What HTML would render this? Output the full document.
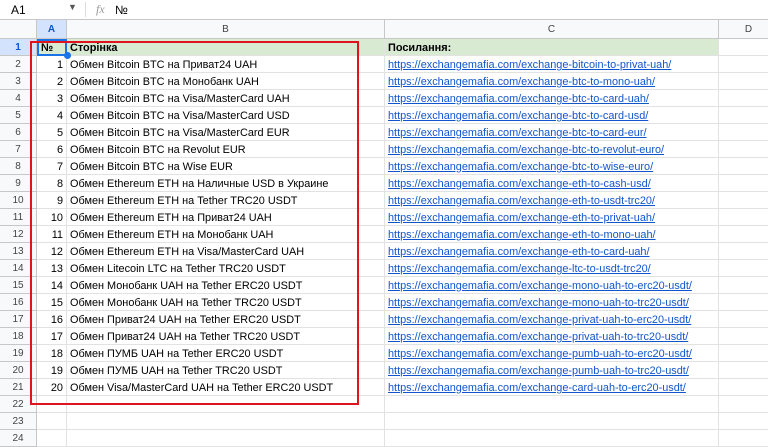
<!DOCTYPE html>
<html><head><meta charset="utf-8"><style>
*{margin:0;padding:0;box-sizing:border-box}
body{width:768px;height:441px;overflow:hidden;background:#fff;font-family:"Liberation Sans",Arial,sans-serif;font-size:10.9px;color:#000;position:relative}
.fb{position:absolute;left:0;top:0;width:768px;height:20px;border-bottom:1px solid #c7c7c7;background:#fff}
.hdr{position:absolute;top:20px;height:19px;background:#f8f9fa;border-right:1px solid #c7c7c7;border-bottom:1px solid #c7c7c7;text-align:center;font-size:10px;color:#444;line-height:19px}
.r{position:absolute;left:0;width:768px;height:17px}
.rh{position:absolute;left:0;top:0;width:37px;height:17px;background:#f8f9fa;border-right:1px solid #c7c7c7;border-bottom:1px solid #c7c7c7;text-align:center;font-size:10px;color:#444;line-height:17px}
.c{position:absolute;top:0;height:17px;border-right:1px solid #e2e2e2;border-bottom:1px solid #e2e2e2;line-height:18px;padding:0 3px;white-space:nowrap;overflow:hidden}
.a{left:37px;width:30px;text-align:right}
.b{left:67px;width:318px}
.cc{left:385px;width:334px;color:#1155cc;text-decoration:underline}
.d{left:719px;width:60px}
.g .a,.g .b,.g .cc{background:#d9ead3;font-weight:bold;color:#000;text-decoration:none;line-height:19px}
.g .a{text-align:left}
</style></head><body>
<div class="fb">
<div style="position:absolute;left:11px;top:3px;font-size:12px">A1</div>
<div style="position:absolute;left:68px;top:2px;font-size:9px;color:#555">▼</div>
<div style="position:absolute;left:85px;top:2px;width:1px;height:15px;background:#ddd"></div>
<div style="position:absolute;left:96px;top:2px;font-size:12px;color:#999;font-style:italic;font-family:'Liberation Serif',serif">fx</div>
<div style="position:absolute;left:115px;top:3px;font-size:12px">№</div>
</div>
<div class="hdr" style="left:0;width:37px"></div>
<div class="hdr" style="left:37px;width:30px;background:#d3e3fd;color:#0b57d0;font-weight:bold">A</div>
<div class="hdr" style="left:67px;width:318px">B</div>
<div class="hdr" style="left:385px;width:334px">C</div>
<div class="hdr" style="left:719px;width:60px">D</div>

<div class="r g" style="top:39px"><div class="rh" style="background:#d3e3fd;color:#0b57d0;font-weight:bold">1</div><div class="c a" style="border:2px solid #1a73e8;line-height:15px;padding-left:2px">№</div><div class="c b">Сторінка</div><div class="c cc">Посилання:</div><div class="c d"></div></div>
<div class="r" style="top:56px"><div class="rh">2</div><div class="c a">1</div><div class="c b">Обмен Bitcoin BTC на Приват24 UAH</div><div class="c cc">https://exchangemafia.com/exchange-bitcoin-to-privat-uah/</div><div class="c d"></div></div>
<div class="r" style="top:73px"><div class="rh">3</div><div class="c a">2</div><div class="c b">Обмен Bitcoin BTC на Монобанк UAH</div><div class="c cc">https://exchangemafia.com/exchange-btc-to-mono-uah/</div><div class="c d"></div></div>
<div class="r" style="top:90px"><div class="rh">4</div><div class="c a">3</div><div class="c b">Обмен Bitcoin BTC на Visa/MasterCard UAH</div><div class="c cc">https://exchangemafia.com/exchange-btc-to-card-uah/</div><div class="c d"></div></div>
<div class="r" style="top:107px"><div class="rh">5</div><div class="c a">4</div><div class="c b">Обмен Bitcoin BTC на Visa/MasterCard USD</div><div class="c cc">https://exchangemafia.com/exchange-btc-to-card-usd/</div><div class="c d"></div></div>
<div class="r" style="top:124px"><div class="rh">6</div><div class="c a">5</div><div class="c b">Обмен Bitcoin BTC на Visa/MasterCard EUR</div><div class="c cc">https://exchangemafia.com/exchange-btc-to-card-eur/</div><div class="c d"></div></div>
<div class="r" style="top:141px"><div class="rh">7</div><div class="c a">6</div><div class="c b">Обмен Bitcoin BTC на Revolut EUR</div><div class="c cc">https://exchangemafia.com/exchange-btc-to-revolut-euro/</div><div class="c d"></div></div>
<div class="r" style="top:158px"><div class="rh">8</div><div class="c a">7</div><div class="c b">Обмен Bitcoin BTC на Wise EUR</div><div class="c cc">https://exchangemafia.com/exchange-btc-to-wise-euro/</div><div class="c d"></div></div>
<div class="r" style="top:175px"><div class="rh">9</div><div class="c a">8</div><div class="c b">Обмен Ethereum ETH на Наличные USD в Украине</div><div class="c cc">https://exchangemafia.com/exchange-eth-to-cash-usd/</div><div class="c d"></div></div>
<div class="r" style="top:192px"><div class="rh">10</div><div class="c a">9</div><div class="c b">Обмен Ethereum ETH на Tether TRC20 USDT</div><div class="c cc">https://exchangemafia.com/exchange-eth-to-usdt-trc20/</div><div class="c d"></div></div>
<div class="r" style="top:209px"><div class="rh">11</div><div class="c a">10</div><div class="c b">Обмен Ethereum ETH на Приват24 UAH</div><div class="c cc">https://exchangemafia.com/exchange-eth-to-privat-uah/</div><div class="c d"></div></div>
<div class="r" style="top:226px"><div class="rh">12</div><div class="c a">11</div><div class="c b">Обмен Ethereum ETH на Монобанк UAH</div><div class="c cc">https://exchangemafia.com/exchange-eth-to-mono-uah/</div><div class="c d"></div></div>
<div class="r" style="top:243px"><div class="rh">13</div><div class="c a">12</div><div class="c b">Обмен Ethereum ETH на Visa/MasterCard UAH</div><div class="c cc">https://exchangemafia.com/exchange-eth-to-card-uah/</div><div class="c d"></div></div>
<div class="r" style="top:260px"><div class="rh">14</div><div class="c a">13</div><div class="c b">Обмен Litecoin LTC на Tether TRC20 USDT</div><div class="c cc">https://exchangemafia.com/exchange-ltc-to-usdt-trc20/</div><div class="c d"></div></div>
<div class="r" style="top:277px"><div class="rh">15</div><div class="c a">14</div><div class="c b">Обмен Монобанк UAH на Tether ERC20 USDT</div><div class="c cc">https://exchangemafia.com/exchange-mono-uah-to-erc20-usdt/</div><div class="c d"></div></div>
<div class="r" style="top:294px"><div class="rh">16</div><div class="c a">15</div><div class="c b">Обмен Монобанк UAH на Tether TRC20 USDT</div><div class="c cc">https://exchangemafia.com/exchange-mono-uah-to-trc20-usdt/</div><div class="c d"></div></div>
<div class="r" style="top:311px"><div class="rh">17</div><div class="c a">16</div><div class="c b">Обмен Приват24 UAH на Tether ERC20 USDT</div><div class="c cc">https://exchangemafia.com/exchange-privat-uah-to-erc20-usdt/</div><div class="c d"></div></div>
<div class="r" style="top:328px"><div class="rh">18</div><div class="c a">17</div><div class="c b">Обмен Приват24 UAH на Tether TRC20 USDT</div><div class="c cc">https://exchangemafia.com/exchange-privat-uah-to-trc20-usdt/</div><div class="c d"></div></div>
<div class="r" style="top:345px"><div class="rh">19</div><div class="c a">18</div><div class="c b">Обмен ПУМБ UAH на Tether ERC20 USDT</div><div class="c cc">https://exchangemafia.com/exchange-pumb-uah-to-erc20-usdt/</div><div class="c d"></div></div>
<div class="r" style="top:362px"><div class="rh">20</div><div class="c a">19</div><div class="c b">Обмен ПУМБ UAH на Tether TRC20 USDT</div><div class="c cc">https://exchangemafia.com/exchange-pumb-uah-to-trc20-usdt/</div><div class="c d"></div></div>
<div class="r" style="top:379px"><div class="rh">21</div><div class="c a">20</div><div class="c b">Обмен Visa/MasterCard UAH на Tether ERC20 USDT</div><div class="c cc">https://exchangemafia.com/exchange-card-uah-to-erc20-usdt/</div><div class="c d"></div></div>
<div class="r" style="top:396px"><div class="rh">22</div><div class="c a"></div><div class="c b"></div><div class="c cc"></div><div class="c d"></div></div>
<div class="r" style="top:413px"><div class="rh">23</div><div class="c a"></div><div class="c b"></div><div class="c cc"></div><div class="c d"></div></div>
<div class="r" style="top:430px"><div class="rh">24</div><div class="c a"></div><div class="c b"></div><div class="c cc"></div><div class="c d"></div></div>

<div style="position:absolute;left:64px;top:52px;width:7px;height:7px;border-radius:50%;background:#1a73e8"></div>
<div style="position:absolute;left:30px;top:41px;width:329px;height:364px;border:2.5px solid #e0141e"></div>
</body></html>
